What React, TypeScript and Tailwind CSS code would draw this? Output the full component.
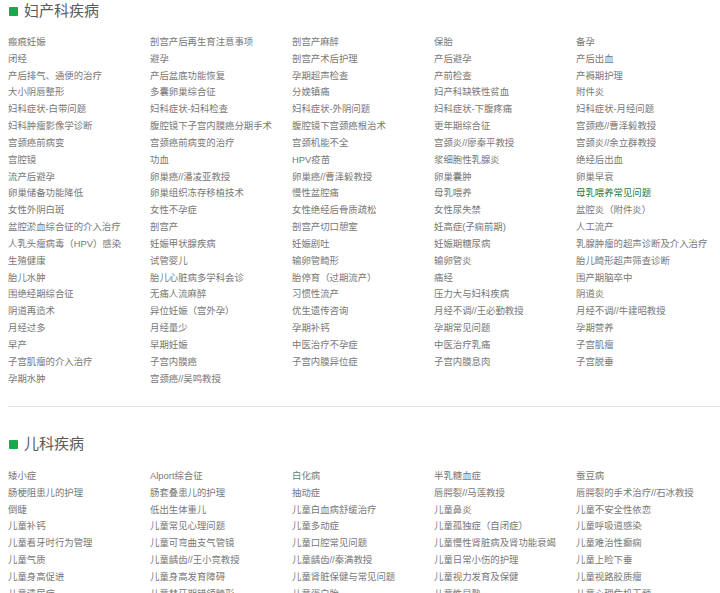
const sec1 = [
  "瘢痕妊娠","剖宫产后再生育注意事项","剖宫产麻醉","保胎","备孕",
  "闭经","避孕","剖宫产术后护理","产后避孕","产后出血",
  "产后排气、通便的治疗","产后盆底功能恢复","孕期超声检查","产前检查","产褥期护理",
  "大小阴唇整形","多囊卵巢综合征","分娩镇痛","妇产科缺铁性贫血","附件炎",
  "妇科症状-白带问题","妇科症状-妇科检查","妇科症状-外阴问题","妇科症状-下腹疼痛","妇科症状-月经问题",
  "妇科肿瘤影像学诊断","腹腔镜下子宫内膜癌分期手术","腹腔镜下宫颈癌根治术","更年期综合征","宫颈癌//曹泽毅教授",
  "宫颈癌前病变","宫颈癌前病变的治疗","宫颈机能不全","宫颈炎//廖秦平教授","宫颈炎//余立群教授",
  "宫腔镜","功血","HPV疫苗","浆细胞性乳腺炎","绝经后出血",
  "流产后避孕","卵巢癌//潘凌亚教授","卵巢癌//曹泽毅教授","卵巢囊肿","卵巢早衰",
  "卵巢储备功能降低","卵巢组织冻存移植技术","慢性盆腔痛","母乳喂养","母乳喂养常见问题",
  "女性外阴白斑","女性不孕症","女性绝经后骨质疏松","女性尿失禁","盆腔炎（附件炎）",
  "盆腔淤血综合征的介入治疗","剖宫产","剖宫产切口憩室","妊高症(子痫前期)","人工流产",
  "人乳头瘤病毒（HPV）感染","妊娠甲状腺疾病","妊娠剧吐","妊娠期糖尿病","乳腺肿瘤的超声诊断及介入治疗",
  "生殖健康","试管婴儿","输卵管畸形","输卵管炎","胎儿畸形超声筛查诊断",
  "胎儿水肿","胎儿心脏病多学科会诊","胎停育（过期流产）","痛经","围产期脑卒中",
  "围绝经期综合征","无痛人流麻醉","习惯性流产","压力大与妇科疾病","阴道炎",
  "阴道再造术","异位妊娠（宫外孕）","优生遗传咨询","月经不调//王必勤教授","月经不调//牛建昭教授",
  "月经过多","月经量少","孕期补钙","孕期常见问题","孕期营养",
  "早产","早期妊娠","中医治疗不孕症","中医治疗乳痛","子宫肌瘤",
  "子宫肌瘤的介入治疗","子宫内膜癌","子宫内膜异位症","子宫内膜息肉","子宫脱垂",
  "孕期水肿","宫颈癌//吴鸣教授",
];
const sec2 = [
  "矮小症","Alport综合征","白化病","半乳糖血症","蚕豆病",
  "肠梗阻患儿的护理","肠套叠患儿的护理","抽动症","唇腭裂//马莲教授","唇腭裂的手术治疗//石冰教授",
  "倒睫","低出生体重儿","儿童白血病舒缓治疗","儿童鼻炎","儿童不安全性依恋",
  "儿童补钙","儿童常见心理问题","儿童多动症","儿童孤独症（自闭症）","儿童呼吸道感染",
  "儿童看牙时行为管理","儿童可弯曲支气管镜","儿童口腔常见问题","儿童慢性肾脏病及肾功能衰竭","儿童难治性癫痫",
  "儿童气质","儿童龋齿//王小竞教授","儿童龋齿//秦满教授","儿童日常小伤的护理","儿童上睑下垂",
  "儿童身高促进","儿童身高发育障碍","儿童肾脏保健与常见问题","儿童视力发育及保健","儿童视路胶质瘤",
  "儿童遗尿症","儿童替牙期错颌畸形","儿童蛋白胎","儿童性早熟","儿童心理危机干预",
];

function Header({ title }: { title: string }) {
  return (
    <div className="flex h-[22px] items-center gap-[6px] pl-[1px]">
      <span className="h-[9px] w-[9px] rounded-[1px] bg-[#16a84a]" />
      <span className="text-[15px] text-[#5a5a5a]">{title}</span>
    </div>
  );
}

function Grid({ items }: { items: string[] }) {
  return (
    <div className="grid grid-cols-[142px_142px_142px_142px_142px]">
      {items.map((t, i) => (
        <div
          key={i}
          className={
            "h-[16.84px] whitespace-nowrap text-[9.4px] leading-[16.84px] " +
            (t === "母乳喂养常见问题" ? "text-[#1f7a3e]" : "text-[#777777]")
          }
        >
          {t}
        </div>
      ))}
    </div>
  );
}

export default function App() {
  return (
    <div
      className="h-[593px] w-[720px] overflow-hidden bg-white pl-[8px]"
      style={{ fontFamily: '"Liberation Sans", "Noto Sans CJK SC", sans-serif' }}
    >
      <Header title="妇产科疾病" />
      <div className="mt-[12px]">
        <Grid items={sec1} />
      </div>
      <div className="mt-[19px] h-px bg-[#e3e3e3]" />
      <div className="mt-[26px]">
        <Header title="儿科疾病" />
      </div>
      <div className="mt-[12.6px]">
        <Grid items={sec2} />
      </div>
    </div>
  );
}
